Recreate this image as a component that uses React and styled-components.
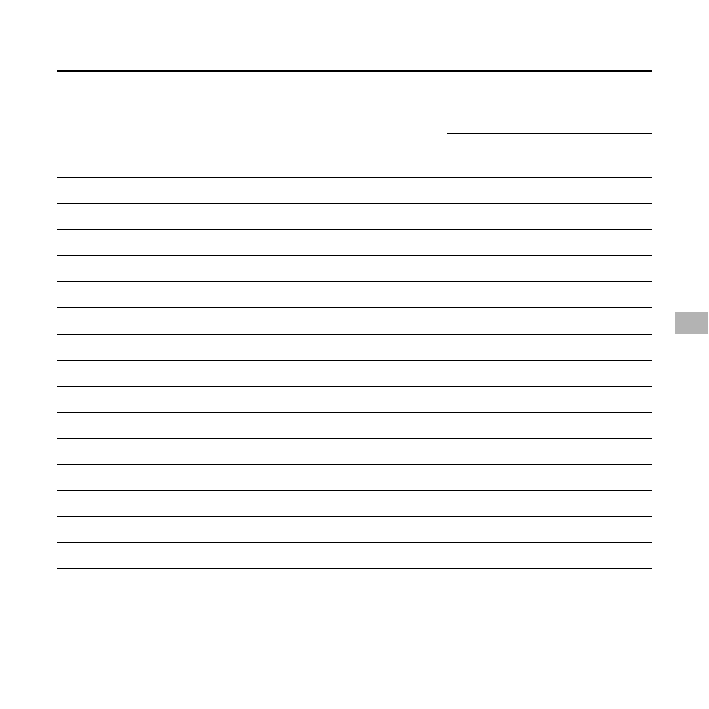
import React from "react";
import styled, { createGlobalStyle } from "styled-components";

const Global = createGlobalStyle`
  html, body { margin: 0; padding: 0; background: #fff; }
  body { font-family: "Liberation Sans", Arial, sans-serif; color: #000; }
  * { box-sizing: border-box; }
`;

const Page = styled.div`
  position: relative;
  width: 709px;
  height: 709px;
  padding: 70px 0 0 57px;
  background: #fff;
`;

const Table = styled.div`
  width: 595px;
  border-top: 2px solid #000;
`;

const Header = styled.div`
  display: grid;
  grid-template-columns: 390px 205px;
  grid-template-rows: 62px 43px;
  border-bottom: 1px solid #000;
`;

const HeadCell = styled.div`
  grid-column: ${(p) => p.$col};
  grid-row: ${(p) => p.$row};
  border-bottom: ${(p) => (p.$rule ? "1px solid #000" : "none")};
  font-size: 12px;
`;

const Row = styled.div`
  display: grid;
  grid-template-columns: 390px 205px;
  height: ${(p) => (p.$tall ? 27 : 26)}px;
  border-bottom: 1px solid #000;
  font-size: 12px;
`;

const Cell = styled.div``;

const SideTab = styled.div`
  position: absolute;
  top: 312px;
  right: 1px;
  width: 33px;
  height: 22px;
  background: #b3b3b3;
`;

export default function App() {
  const rows = Array.from({ length: 15 }, (_, i) => i);
  return (
    <>
      <Global />
      <Page>
        <Table>
          <Header>
            <HeadCell $col="1" $row="1 / span 2" />
            <HeadCell $col="2" $row="1" $rule />
            <HeadCell $col="2" $row="2" />
          </Header>
          {rows.map((i) => (
            <Row key={i} $tall={i === 5}>
              <Cell />
              <Cell />
            </Row>
          ))}
        </Table>
        <SideTab />
      </Page>
    </>
  );
}
